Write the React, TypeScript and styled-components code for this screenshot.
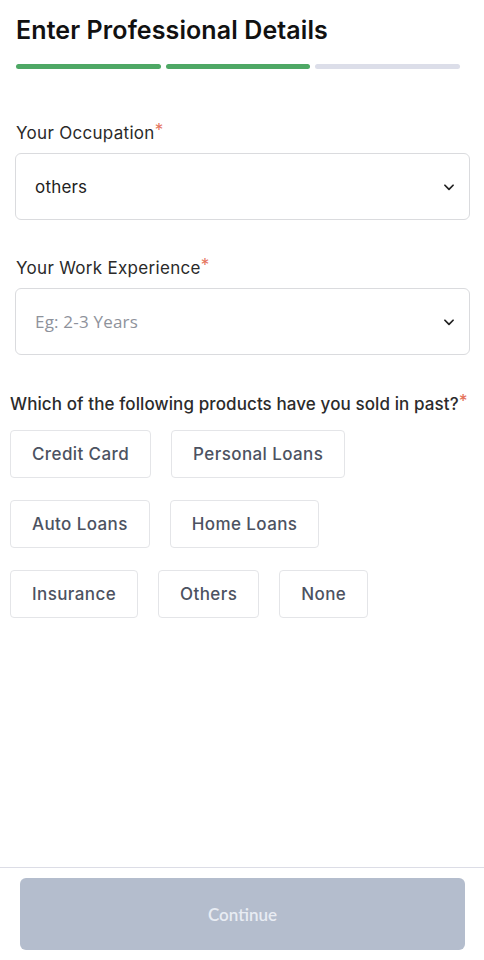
import React, { useState } from "react";
import styled, { createGlobalStyle } from "styled-components";

const GlobalStyle = createGlobalStyle`
  body {
    margin: 0;
    background: #ffffff;
    font-family: Inter, "Open Sans", sans-serif;
  }
  #root {
    min-height: 960px;
  }
`;

const PRODUCT_ROWS = [
    ["Credit Card", "Personal Loans"],
    ["Auto Loans", "Home Loans"],
    ["Insurance", "Others", "None"],
];

function Chevron() {
    return (
        <svg width="14" height="14" viewBox="0 0 24 24" fill="none">
            <path
                d="M5 9l7 7 7-7"
                stroke="#222"
                strokeWidth="3"
                strokeLinecap="round"
                strokeLinejoin="round"
            />
        </svg>
    );
}

export default function App() {
    const [selected, setSelected] = useState<string[]>([]);

    const toggle = (item: string) => {
        setSelected((prev) =>
            prev.includes(item) ? prev.filter((p) => p !== item) : [...prev, item]
        );
    };

    return (
        <Page>
            <GlobalStyle />
            <Content>
                <Title>Enter Professional Details</Title>
                <Steps>
                    <Step $done />
                    <Step $done />
                    <Step />
                </Steps>

                <Field>
                    <Label>
                        Your Occupation<Star>*</Star>
                    </Label>
                    <Select>
                        <SelectValue>others</SelectValue>
                        <Chevron />
                    </Select>
                </Field>

                <Field>
                    <Label>
                        Your Work Experience<Star>*</Star>
                    </Label>
                    <Select>
                        <SelectValue $placeholder>Eg: 2-3 Years</SelectValue>
                        <Chevron />
                    </Select>
                </Field>

                <Question>
                    Which of the following products have you sold in past?<Star>*</Star>
                </Question>
                <Chips>
                    {PRODUCT_ROWS.map((row, i) => (
                        <ChipRow key={i}>
                            {row.map((item) => (
                                <Chip
                                    key={item}
                                    $active={selected.includes(item)}
                                    onClick={() => toggle(item)}
                                >
                                    {item}
                                </Chip>
                            ))}
                        </ChipRow>
                    ))}
                </Chips>
            </Content>

            <Footer>
                <ContinueButton disabled>Continue</ContinueButton>
            </Footer>
        </Page>
    );
}

const Page = styled.div`
    display: flex;
    flex-direction: column;
    min-height: 960px;
`;

const Content = styled.div`
    flex: 1;
    padding: 14px 14px 0 15px;
`;

const Title = styled.h1`
    margin: 0 0 0 1px;
    font-size: 25px;
    line-height: 32px;
    font-weight: 600;
    letter-spacing: 0.1px;
    color: #111;
`;

const Steps = styled.div`
    display: grid;
    grid-template-columns: repeat(3, 1fr);
    gap: 5px;
    margin: 18px 10px 0 1px;
`;

const Step = styled.div<{ $done?: boolean }>`
    height: 5px;
    border-radius: 3px;
    background: ${(p) => (p.$done ? "#4ea865" : "#dcdee9")};
`;

const Field = styled.div`
    margin-top: 50px;

    & + & {
        margin-top: 34px;
    }
`;

const Label = styled.div`
    margin-left: 1px;
    font-size: 17px;
    line-height: 22px;
    letter-spacing: 0.3px;
    color: #2a2a2a;
`;

const Star = styled.span`
    color: #e5735c;
    vertical-align: 3px;
`;

const Select = styled.div`
    display: flex;
    align-items: center;
    justify-content: space-between;
    height: 65px;
    margin-top: 9px;
    padding: 0 13px 0 19px;
    border: 1px solid #dadbde;
    border-radius: 6px;
`;

const SelectValue = styled.span<{ $placeholder?: boolean }>`
    font-family: ${(p) => (p.$placeholder ? '"Open Sans", sans-serif' : "Inter, sans-serif")};
    font-size: 17px;
    letter-spacing: 0.2px;
    color: ${(p) => (p.$placeholder ? "#8e929b" : "#222")};
`;

const Question = styled.div`
    margin: 35px 0 0 -5px;
    font-size: 17px;
    line-height: 22px;
    font-weight: 500;
    letter-spacing: 0.1px;
    color: #2b2b2b;
`;

const Chips = styled.div`
    display: flex;
    flex-direction: column;
    gap: 22px;
    margin: 15px 0 0 -5px;
`;

const ChipRow = styled.div`
    display: flex;
    gap: 20px;
`;

const Chip = styled.button<{ $active?: boolean }>`
    height: 48px;
    padding: 0 21px;
    border: 1px solid ${(p) => (p.$active ? "#4ea865" : "#e4e5e8")};
    border-radius: 4px;
    background: ${(p) => (p.$active ? "#eef8f1" : "#fff")};
    font-family: Inter, sans-serif;
    font-size: 17px;
    font-weight: 500;
    letter-spacing: 0.4px;
    color: #4c5261;
    cursor: pointer;
`;

const Footer = styled.div`
    border-top: 1px solid #dcdde6;
    padding: 10px 19px 10px 20px;
`;

const ContinueButton = styled.button`
    display: block;
    width: 100%;
    height: 72px;
    border: none;
    border-radius: 6px;
    background: #b4bdcd;
    font-family: Lato, sans-serif;
    font-size: 17px;
    font-weight: 600;
    color: #e8ecf3;
`;
